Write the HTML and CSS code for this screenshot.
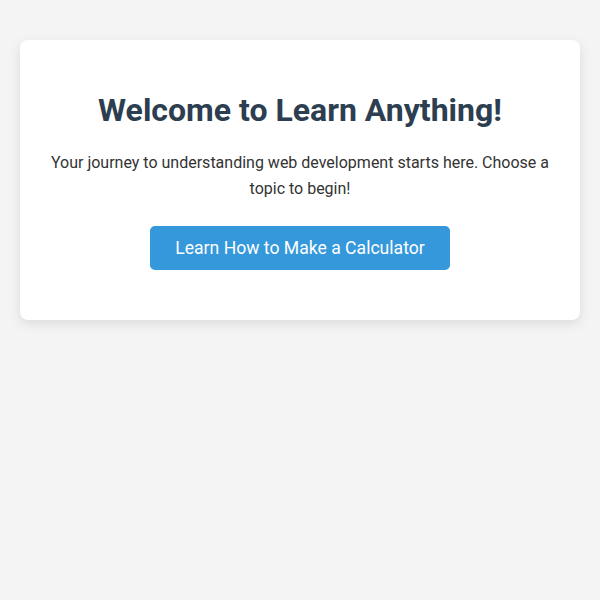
FILE: index.html
```html
<!DOCTYPE html>
<html>
<head>
<meta charset="utf-8">
<link rel="stylesheet" href="styles.css">
</head>
<body>
<div class="card">
  <h1 class="title">Welcome to Learn Anything!</h1>
  <p class="intro">Your journey to understanding web development starts here. Choose a topic to begin!</p>
  <div class="actions"><button class="btn">Learn How to Make a Calculator</button></div>
</div>
</body>
</html>
```
FILE: styles.css
```css
html, body { margin: 0; padding: 0; }
body {
  background: #f4f4f4;
  font-family: Roboto, "Liberation Sans", sans-serif;
  padding: 40px 20px;
  color: #333;
}
.card {
  background: #fff;
  border-radius: 8px;
  box-shadow: 0 4px 12px rgba(0,0,0,0.1);
  padding: 30px;
  text-align: center;
}
.title {
  font-size: 32px;
  font-weight: 700;
  color: #2c3e50;
  margin: 21px 0;
  line-height: 38px;
}
.intro {
  font-size: 16px;
  line-height: 1.6;
  margin: 0 0 25px;
}
.actions { margin-bottom: 20px; }
.btn {
  font-family: inherit;
  font-size: 17.6px;
  color: #fff;
  background: #3498db;
  border: none;
  border-radius: 5px;
  padding: 12px 25px;
  line-height: 20px;
  cursor: pointer;
}
```
